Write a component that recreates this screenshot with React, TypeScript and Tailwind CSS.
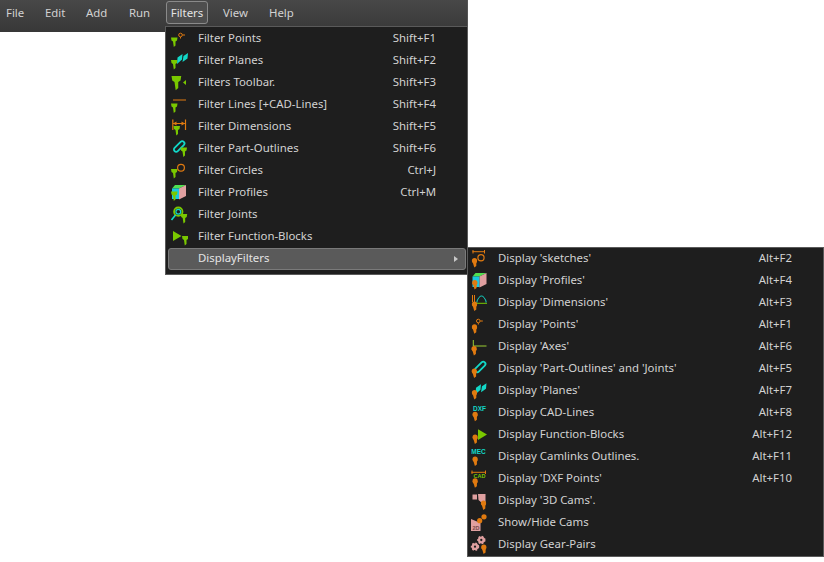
import { ReactNode } from "react";

const GREEN = "#7ac800";
const ORANGE = "#e07a10";
const CYAN = "#12d8c8";
const PINK = "#e0a0a0";

// small green funnel used by the Filters entries
function Funnel({ x = 0, y = 0, s = 1 }: { x?: number; y?: number; s?: number }) {
  return (
    <path
      transform={`translate(${x} ${y}) scale(${s})`}
      d="M0 0H6.5L6 3L4.5 4V8L2.8 9.5L2 4L0.5 3Z"
      fill={GREEN}
    />
  );
}

// orange pin used by the Display entries
function Pin({ x = 0, y = 0 }: { x?: number; y?: number }) {
  return (
    <g transform={`translate(${x} ${y})`} fill={ORANGE}>
      <circle cx="2.8" cy="2.6" r="2.6" />
      <path d="M0.2 3H5.4L4.6 5.5V8L2.6 9.5L1.4 5.5Z" />
    </g>
  );
}

function PointGlyph({ x = 0, y = 0 }: { x?: number; y?: number }) {
  return (
    <g transform={`translate(${x} ${y})`} stroke={ORANGE} fill="none">
      <circle cx="3" cy="3" r="1.8" />
      <path d="M5 3H7.5M3 5V6.5" />
    </g>
  );
}

function Planes({ x = 0, y = 0 }: { x?: number; y?: number }) {
  return (
    <path
      transform={`translate(${x} ${y})`}
      d="M1.5 4.5L6.5 1L6 6.5L1 11ZM7.5 3L12 0L11.5 5.5L6.5 9Z"
      fill={CYAN}
    />
  );
}

function Cube({ x = 0, y = 0 }: { x?: number; y?: number }) {
  return (
    <g transform={`translate(${x} ${y})`}>
      <path d="M0 3.5L3 0H14L7 3.5Z" fill="#50e050" />
      <path d="M0 3.5H7V14H0Z" fill="#18c8e0" />
      <path d="M7 3.5L14 0V11L7 14.5Z" fill={PINK} />
    </g>
  );
}

function Clip({ x = 0, y = 0 }: { x?: number; y?: number }) {
  return (
    <rect
      transform={`translate(${x} ${y}) rotate(-45)`}
      width="13"
      height="4.5"
      rx="2.25"
      fill="none"
      stroke={CYAN}
      strokeWidth="1.8"
    />
  );
}

function Gear({ x, y, r }: { x: number; y: number; r: number }) {
  return (
    <g>
      <circle cx={x} cy={y} r={r} fill={PINK} stroke={PINK} strokeWidth="1.6" strokeDasharray="1.6 1.6" />
      <circle cx={x} cy={y} r={r / 3} fill="#202020" />
    </g>
  );
}

function Icon({ children }: { children: ReactNode }) {
  return (
    <svg width="20" height="20" viewBox="0 0 20 20" className="shrink-0">
      {children}
    </svg>
  );
}

type Item = { label: string; keys?: string; icon?: ReactNode };

const filterItems: Item[] = [
  { label: "Filter Points", keys: "Shift+F1", icon: <><Funnel x={3} y={8.5} /><PointGlyph x={9.5} y={3} /></> },
  { label: "Filter Planes", keys: "Shift+F2", icon: <><Funnel x={3} y={9} /><Planes x={8} y={2} /></> },
  { label: "Filters Toolbar.", keys: "Shift+F3", icon: <><Funnel x={3.5} y={3} s={1.5} /><path d="M18 7L15 9.5L18 12Z" fill={GREEN} /></> },
  { label: "Filter Lines [+CAD-Lines]", keys: "Shift+F4", icon: <><Funnel x={3} y={8.5} /><path d="M5 5H18" stroke={ORANGE} strokeWidth="1" /></> },
  { label: "Filter Dimensions", keys: "Shift+F5", icon: <><path d="M4.8 2.5V13M17.5 2.5V13M5 6.5H17" stroke={ORANGE} strokeWidth="1.2" /><path d="M5 6.5L8.5 4.5V8.5ZM17 6.5L13.5 4.5V8.5Z" fill={ORANGE} /><Funnel x={5.5} y={9} /></> },
  { label: "Filter Part-Outlines", keys: "Shift+F6", icon: <><Clip x={5} y={10.5} /><Funnel x={12.5} y={8.5} /></> },
  { label: "Filter Circles", keys: "Ctrl+J", icon: <><Funnel x={3} y={8} /><circle cx="13" cy="6.7" r="3.4" fill="none" stroke={ORANGE} strokeWidth="1.2" /></> },
  { label: "Filter Profiles", keys: "Ctrl+M", icon: <><Cube x={4} y={2} /><Funnel x={3} y={8.5} /></> },
  { label: "Filter Joints", icon: <><circle cx="10.3" cy="6.7" r="4.2" fill="none" stroke={GREEN} strokeWidth="1.8" /><circle cx="10.3" cy="6.7" r="2.4" fill="none" stroke={CYAN} strokeWidth="1.2" /><path d="M7.5 10L3.5 15" stroke={CYAN} strokeWidth="1.6" /><Funnel x={12.7} y={9} /></> },
  { label: "Filter Function-Blocks", icon: <><path d="M5 4L13.5 9L5 14Z" fill={GREEN} /><Funnel x={14} y={9} /></> },
];

const displayItems: Item[] = [
  { label: "Display 'sketches'", keys: "Alt+F2", icon: <><path d="M3.5 2.7H16M4 1V4.5M15.5 1V4.5" stroke={ORANGE} strokeWidth="1" /><circle cx="12" cy="8.7" r="3.1" fill="none" stroke={ORANGE} strokeWidth="1.2" /><Pin x={2.7} y={9} /></> },
  { label: "Display 'Profiles'", keys: "Alt+F4", icon: <><Cube x={3.5} y={2} /><Pin x={3} y={9} /></> },
  { label: "Display 'Dimensions'", keys: "Alt+F3", icon: <><path d="M7 10.3H18" stroke={GREEN} strokeWidth="1" /><path d="M8 9.5V8C9.5 5 10.5 3 12.5 3S15.5 5 17 8V9.5" fill="none" stroke={CYAN} strokeWidth="1" /><path d="M3.5 2V9M5.5 2V9" stroke={ORANGE} /><Pin x={2.7} y={8.5} /></> },
  { label: "Display 'Points'", keys: "Alt+F1", icon: <><PointGlyph x={6.3} y={3} /><Pin x={2.7} y={9.3} /></> },
  { label: "Display 'Axes'", keys: "Alt+F6", icon: <><path d="M4.3 3V9M4.3 9H17.5" stroke="#9acd32" strokeWidth="1" /><Pin x={2.3} y={9} /></> },
  { label: "Display 'Part-Outlines' and 'Joints'", keys: "Alt+F5", icon: <><Clip x={5} y={11} /><Pin x={2.5} y={9.5} /></> },
  { label: "Display 'Planes'", keys: "Alt+F7", icon: <><Planes x={5.5} y={2.3} /><Pin x={2.7} y={9} /></> },
  { label: "Display CAD-Lines", keys: "Alt+F8", icon: <><text x="4" y="7.7" fontSize="6.5" fontWeight="700" fill={CYAN} fontFamily="Liberation Sans, sans-serif">DXF</text><Pin x={3.3} y={8.7} /></> },
  { label: "Display Function-Blocks", keys: "Alt+F12", icon: <><path d="M9 4.3L18 9.5L9 15Z" fill={GREEN} /><Pin x={3.3} y={9.5} /></> },
  { label: "Display Camlinks Outlines.", keys: "Alt+F11", icon: <><text x="2.3" y="7" fontSize="6.5" fontWeight="700" fill={CYAN} fontFamily="Liberation Sans, sans-serif">MEC</text><Pin x={3.3} y={9.5} /></> },
  { label: "Display 'DXF Points'", keys: "Alt+F10", icon: <><path d="M2.5 3.3H17M3 1.5V5M16.5 1.5V5" stroke={ORANGE} strokeWidth="1" /><text x="4.5" y="9" fontSize="5.5" fontWeight="700" fill={GREEN} fontFamily="Liberation Sans, sans-serif">CAD</text><Pin x={3.3} y={9.3} /></> },
  { label: "Display '3D Cams'.", icon: <><path d="M3.5 3.5H8V8.5H3.5ZM9 3H16.5V12H13L9.5 9Z" fill={PINK} /><Pin x={11.7} y={9.5} /></> },
  { label: "Show/Hide Cams", icon: <><path d="M2 6L11.5 10V18H2Z" fill={PINK} /><text x="3.5" y="17" fontSize="5.5" fontWeight="700" fill="#7a4a4a" fontFamily="Liberation Sans, sans-serif">2D</text><circle cx="10.7" cy="7.7" r="2.6" fill={ORANGE} /><circle cx="15" cy="3.8" r="2.6" fill={ORANGE} /></> },
  { label: "Display Gear-Pairs", icon: <><Gear x={6} y={11.7} r={3.4} /><Gear x={12.3} y={5} r={3.4} /><Pin x={12} y={9.5} /></> },
];

function MenuRow({ item, iconClass }: { item: Item; iconClass: string }) {
  return (
    <div className="flex h-[22px] items-center text-[#d2d2d2]">
      <span className={iconClass}>{item.icon && <Icon>{item.icon}</Icon>}</span>
      <span className="flex-1 whitespace-nowrap pb-[2px]">{item.label}</span>
      {item.keys && <span className="whitespace-nowrap pb-[2px] pr-[30px] text-right">{item.keys}</span>}
    </div>
  );
}

const topMenus = [
  { label: "File", cls: "w-[39px]" },
  { label: "Edit", cls: "w-[41px]" },
  { label: "Add", cls: "w-[43px]" },
  { label: "Run", cls: "w-[37px]" },
];

export default function App() {
  return (
    <div className="relative h-[562px] w-[824px] overflow-hidden bg-white font-['Noto_Sans',sans-serif] text-[11.4px]">
      <div className="flex h-[32px] w-[468px] items-start border-r border-[#555] bg-gradient-to-b from-[#484848] to-[#383838] pt-[1px] text-[#d2d2d2]">
        <div className="flex h-[23px] items-center pl-[6px]">
          {topMenus.map((m) => (
            <span key={m.label} className={m.cls}>{m.label}</span>
          ))}
        </div>
        <span className="flex h-[23px] w-[42px] items-center justify-center rounded-[3px] border border-[#8a8a8a] bg-[#4e4e4e] text-[#e4e4e4]">Filters</span>
        <span className="ml-[15px] flex h-[23px] items-center">View</span>
        <span className="ml-[21px] flex h-[23px] items-center">Help</span>
      </div>

      <div className="absolute left-[165px] top-[26px] w-[303px] border border-[#5a5a5a] bg-[#1e1e1e] pb-[4px] pl-[2px] pr-[1px] pt-[1px]">
        {filterItems.map((it) => (
          <MenuRow key={it.label} item={it} iconClass="flex h-[20px] w-[30px] justify-start" />
        ))}
        <div className="flex h-[22px] items-center rounded-[3px] border border-[#7a7a7a] bg-[#5a5a5a] text-[#e4e4e4]">
          <span className="w-[29px]" />
          <span className="flex-1 pb-[2px]">DisplayFilters</span>
          <svg width="4" height="6" viewBox="0 0 4 6" className="mr-[7px]">
            <path d="M0 0L4 3L0 6Z" fill="#c8c8c8" />
          </svg>
        </div>
      </div>

      <div className="absolute left-[467px] top-[247px] w-[357px] border border-[#5a5a5a] bg-[#1e1e1e] px-[1px]">
        {displayItems.map((it) => (
          <MenuRow key={it.label} item={it} iconClass="flex h-[20px] w-[29px] justify-start" />
        ))}
      </div>
    </div>
  );
}
